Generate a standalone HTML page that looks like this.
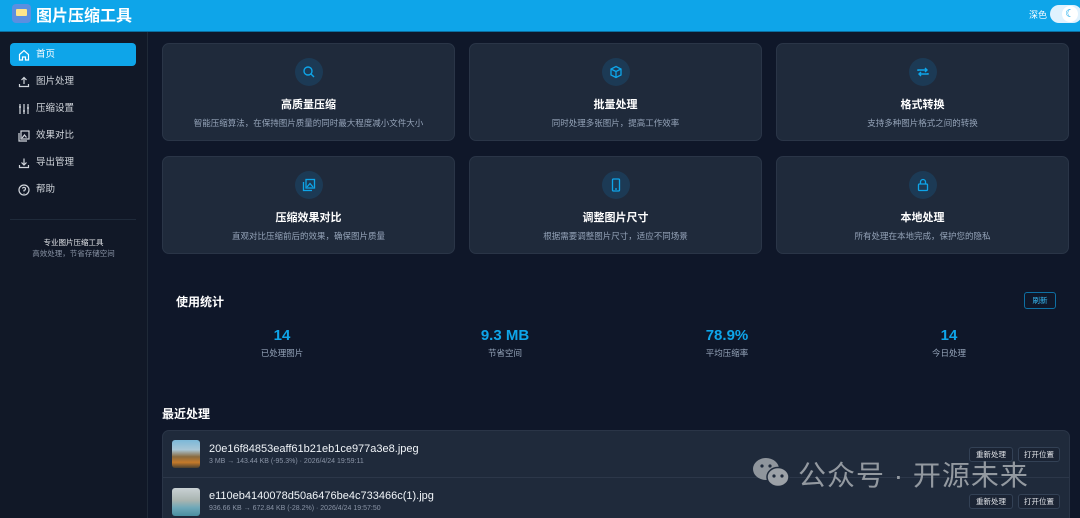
<!DOCTYPE html>
<html style="overflow:hidden;width:1080px;height:518px"><head><meta charset="utf-8"><style>
*{margin:0;padding:0;box-sizing:border-box}
body{width:1080px;height:518px;overflow:hidden;background:#0f1729;font-family:"Liberation Sans","Noto Sans CJK SC",sans-serif;color:#e5e7eb;position:relative}
.hdr{position:absolute;left:0;top:0;width:1080px;height:32px;background:#0ea5e9;border-bottom:1px solid #0b6fa0}
.logo{position:absolute;left:12px;top:4px;width:19px;height:19px;border-radius:4px;background:#5b8fe0}
.logo:after{content:"";position:absolute;left:4px;top:5px;width:11px;height:7px;background:#fde68a;border-radius:1px}
.ttl{position:absolute;left:36px;top:2px;font-size:16px;font-weight:bold;color:#fff}
.dk{position:absolute;left:1029px;top:8px;font-size:9px;color:#fff}
.tg{position:absolute;left:1050px;top:5px;width:32px;height:18px;border-radius:9px;background:#e0f2fe}
.tg i{position:absolute;right:4px;top:1px;width:16px;height:16px;border-radius:50%;background:#fff;font-style:normal;font-size:11px;color:#0ea5e9;text-align:center;line-height:16px}
.sb{position:absolute;left:0;top:32px;width:148px;height:486px;background:#111827;border-right:1px solid #1f2937}
.nav{position:absolute;left:10px;width:126px;height:23px;border-radius:4px;font-size:9.5px;color:#d1d5db;line-height:23px;padding-left:26px}
.nav.on{background:#0ea5e9;color:#fff}
.nav svg{position:absolute;left:8px;top:6px}
.sep{position:absolute;left:10px;width:126px;height:1px;background:#1f2a3a}
.card{position:absolute;width:293px;height:98px;background:#1f2a3b;border:1px solid #2a3547;border-radius:7px;text-align:center}
.ic{position:absolute;left:132px;top:14px;width:28px;height:28px;border-radius:50%;background:#1c3a55}
.ic svg{position:absolute;left:7px;top:7px}
.ct{position:absolute;left:0;right:0;top:52px;font-size:11px;font-weight:bold;color:#fff}
.cd{position:absolute;left:0;right:0;top:73px;font-size:8.5px;color:#94a3b8}
.sn{position:absolute;width:140px;text-align:center;font-size:15px;font-weight:bold;color:#0ea5e9}
.sl{position:absolute;width:140px;text-align:center;font-size:8.5px;color:#94a3b8}
.btn{position:absolute;font-size:7.5px;color:#e5e7eb;border:1px solid #334155;border-radius:3px;background:#1b2434;text-align:center;height:15px;line-height:13px}
</style></head><body>
<div class="hdr"><div class="logo"></div><div class="ttl">图片压缩工具</div><div class="dk">深色</div><div class="tg"><i>☾</i></div></div>
<div class="sb">
<div class="nav on" style="top:11px"><svg width="12" height="12" viewBox="0 0 12 12" fill="none" stroke="#fff" stroke-width="1.2"><path d="M1.5 5.5L6 1.5l4.5 4V11h-3V8h-3v3h-3z"/></svg>首页</div>
<div class="nav" style="top:38px"><svg width="12" height="12" viewBox="0 0 12 12" fill="none" stroke="#d1d5db" stroke-width="1.2"><path d="M6 8V1.5M3.5 4L6 1.5 8.5 4M1.5 8v2.5h9V8"/></svg>图片处理</div>
<div class="nav" style="top:65px"><svg width="12" height="12" viewBox="0 0 12 12" fill="none" stroke="#d1d5db" stroke-width="1.2"><path d="M2 1v10M6 1v10M10 1v10M1 4h2M5 8h2M9 5h2"/></svg>压缩设置</div>
<div class="nav" style="top:92px"><svg width="12" height="12" viewBox="0 0 12 12" fill="none" stroke="#d1d5db" stroke-width="1.2"><rect x="3" y="1" width="8" height="8"/><path d="M1 3v8h8M4 8l2.5-3 2 2.5"/></svg>效果对比</div>
<div class="nav" style="top:119px"><svg width="12" height="12" viewBox="0 0 12 12" fill="none" stroke="#d1d5db" stroke-width="1.2"><path d="M6 1.5V8M3.5 5.5L6 8l2.5-2.5M1.5 8v2.5h9V8"/></svg>导出管理</div>
<div class="nav" style="top:146px"><svg width="12" height="12" viewBox="0 0 12 12" fill="none" stroke="#d1d5db" stroke-width="1.2"><circle cx="6" cy="6" r="5"/><path d="M4.5 4.5a1.5 1.5 0 1 1 1.5 1.8V7.5M6 9v.5"/></svg>帮助</div>
<div class="sep" style="top:187px"></div>
<div style="position:absolute;left:0;width:147px;top:205px;text-align:center;font-size:7.5px;color:#e5e7eb">专业图片压缩工具</div>
<div style="position:absolute;left:0;width:147px;top:216px;text-align:center;font-size:7.5px;color:#8a94a6">高效处理，节省存储空间</div>
</div>

<div class="card" style="left:162px;top:43px"><div class="ic"><svg width="14" height="14" viewBox="0 0 14 14" fill="none" stroke="#0ea5e9" stroke-width="1.4"><circle cx="6" cy="6" r="4"/><path d="M9 9l3 3"/></svg></div><div class="ct">高质量压缩</div><div class="cd">智能压缩算法，在保持图片质量的同时最大程度减小文件大小</div></div>
<div class="card" style="left:469px;top:43px"><div class="ic"><svg width="14" height="14" viewBox="0 0 14 14" fill="none" stroke="#0ea5e9" stroke-width="1.3"><path d="M7 1.5l5 2.5v6l-5 2.5-5-2.5V4zM2 4l5 2.5L12 4M7 6.5v6"/></svg></div><div class="ct">批量处理</div><div class="cd">同时处理多张图片，提高工作效率</div></div>
<div class="card" style="left:776px;top:43px"><div class="ic"><svg width="14" height="14" viewBox="0 0 14 14" fill="none" stroke="#0ea5e9" stroke-width="1.4"><path d="M2 6V5h9M9 3l2 2-2 2M12 8v1H3M5 11L3 9l2-2"/></svg></div><div class="ct">格式转换</div><div class="cd">支持多种图片格式之间的转换</div></div>
<div class="card" style="left:162px;top:156px"><div class="ic"><svg width="14" height="14" viewBox="0 0 14 14" fill="none" stroke="#0ea5e9" stroke-width="1.3"><rect x="4" y="1.5" width="8.5" height="8.5"/><path d="M1.5 4v8.5H10M5 9l3-3.5 3 3.5"/></svg></div><div class="ct">压缩效果对比</div><div class="cd">直观对比压缩前后的效果，确保图片质量</div></div>
<div class="card" style="left:469px;top:156px"><div class="ic"><svg width="14" height="14" viewBox="0 0 14 14" fill="none" stroke="#0ea5e9" stroke-width="1.3"><rect x="3.5" y="1" width="7" height="12" rx="1"/><path d="M6 11h2"/></svg></div><div class="ct">调整图片尺寸</div><div class="cd">根据需要调整图片尺寸，适应不同场景</div></div>
<div class="card" style="left:776px;top:156px"><div class="ic"><svg width="14" height="14" viewBox="0 0 14 14" fill="none" stroke="#0ea5e9" stroke-width="1.3"><rect x="2.5" y="6" width="9" height="6.5" rx="1"/><path d="M4.5 6V4a2.5 2.5 0 0 1 5 0v2"/></svg></div><div class="ct">本地处理</div><div class="cd">所有处理在本地完成，保护您的隐私</div></div>

<div style="position:absolute;left:176px;top:293px;font-size:12px;font-weight:bold;color:#fff">使用统计</div>
<div class="btn" style="left:1024px;top:292px;width:32px;height:17px;line-height:15px;border-color:#0e6fa3;color:#38bdf8;background:transparent">刷新</div>
<div class="sn" style="left:212px;top:327px">14</div><div class="sl" style="left:212px;top:347px">已处理图片</div>
<div class="sn" style="left:435px;top:327px">9.3 MB</div><div class="sl" style="left:435px;top:347px">节省空间</div>
<div class="sn" style="left:657px;top:327px">78.9%</div><div class="sl" style="left:657px;top:347px">平均压缩率</div>
<div class="sn" style="left:879px;top:327px">14</div><div class="sl" style="left:879px;top:347px">今日处理</div>

<div style="position:absolute;left:162px;top:405px;font-size:12px;font-weight:bold;color:#fff">最近处理</div>
<div style="position:absolute;left:162px;top:430px;width:908px;height:88px;background:#1f2a3b;border:1px solid #2a3547;border-bottom:none;border-radius:7px 7px 0 0"></div>
<div style="position:absolute;left:163px;top:477px;width:906px;height:1px;background:#2c3749"></div>
<div style="position:absolute;left:172px;top:440px;width:28px;height:28px;border-radius:3px;background:linear-gradient(#7bb8d8 0%,#a9c6d6 35%,#8a6a3e 60%,#c57a2a 80%,#4a4030)"></div>
<div style="position:absolute;left:209px;top:443px;font-size:11px;color:#f1f5f9">20e16f84853eaff61b21eb1ce977a3e8.jpeg</div>
<div style="position:absolute;left:209px;top:458px;font-size:7px;color:#8a94a6">3 MB → 143.44 KB (-95.3%) · 2026/4/24 19:59:11</div>
<div style="position:absolute;left:172px;top:488px;width:28px;height:28px;border-radius:3px;background:linear-gradient(#c9d1d4 0%,#a8b4b0 45%,#6fa8b8 70%,#4a8ea0)"></div>
<div style="position:absolute;left:209px;top:490px;font-size:11px;color:#f1f5f9">e110eb4140078d50a6476be4c733466c(1).jpg</div>
<div style="position:absolute;left:209px;top:505px;font-size:7px;color:#8a94a6">936.66 KB → 672.84 KB (-28.2%) · 2026/4/24 19:57:50</div>
<div class="btn" style="left:969px;top:447px;width:44px">重新处理</div><div class="btn" style="left:1018px;top:447px;width:42px">打开位置</div>
<div class="btn" style="left:969px;top:494px;width:44px">重新处理</div><div class="btn" style="left:1018px;top:494px;width:42px">打开位置</div>

<svg style="position:absolute;left:752px;top:456px" width="40" height="34" viewBox="0 0 40 34"><ellipse cx="14" cy="13" rx="13" ry="11" fill="#8f959c"/><ellipse cx="26" cy="21" rx="11" ry="9.5" fill="#9ca1a7" stroke="#1f2a3b" stroke-width="1.5"/><circle cx="22" cy="20" r="1.6" fill="#1f2a3b"/><circle cx="30" cy="20" r="1.6" fill="#1f2a3b"/><circle cx="10" cy="10" r="1.6" fill="#1f2a3b"/><circle cx="18" cy="10" r="1.6" fill="#1f2a3b"/></svg>
<div style="position:absolute;left:798px;top:454px;font-size:28px;color:rgba(160,165,172,.9);letter-spacing:1px">公众号 · 开源未来</div>
</body></html>
